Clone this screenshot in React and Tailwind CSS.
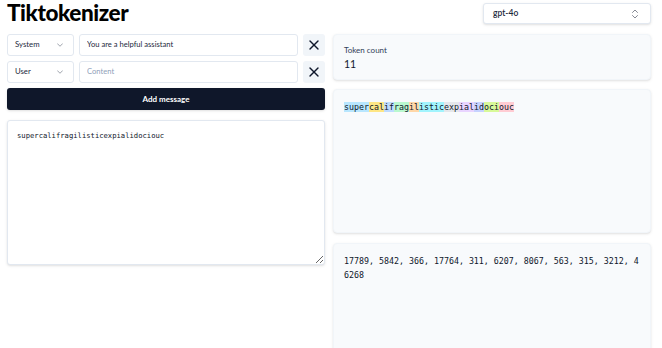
import { X, ChevronDown, ChevronsUpDown } from 'lucide-react';

const TOKENS = [
  ['super', 'bg-sky-200'],
  ['cal', 'bg-amber-200'],
  ['if', 'bg-blue-200'],
  ['rag', 'bg-green-200'],
  ['il', 'bg-orange-200'],
  ['istic', 'bg-cyan-200'],
  ['exp', 'bg-gray-200'],
  ['ial', 'bg-purple-200'],
  ['id', 'bg-indigo-200'],
  ['oci', 'bg-lime-200'],
  ['ouc', 'bg-rose-200'],
];

const IDS = [17789, 5842, 366, 17764, 311, 6207, 8067, 563, 315, 3212, 46268];

function MessageRow({ role, content }) {
  return (
    <div className="flex gap-[5px] h-[22px]">
      <div className="w-[67px] flex items-center justify-between pl-[7px] pr-[8px] rounded-[3px] border border-slate-200 bg-white text-[7.75px] text-slate-800">
        <span>{role}</span>
        <ChevronDown size={10} className="opacity-50" />
      </div>
      <input
        defaultValue={content}
        placeholder="Content"
        className="flex-1 min-w-0 px-[7px] rounded-[3px] border border-slate-200 bg-white text-[7.6px] text-slate-800 placeholder:text-slate-400 outline-none"
      />
      <button className="w-[22px] flex items-center justify-center rounded-[3px] bg-slate-100 text-slate-900">
        <X size={16} strokeWidth={2} />
      </button>
    </div>
  );
}

export default function App() {
  return (
    <div className="w-[662px] h-[348px] overflow-hidden bg-white text-slate-900 [font-family:Lato,sans-serif]">
      <div className="pl-[7px] pr-[11px] pt-[3px]">
        <div className="flex items-center justify-between h-[21px]">
          <h1 className="text-[22.5px] font-black leading-none tracking-[-0.4px] text-black">Tiktokenizer</h1>
          <div className="w-[168px] h-[21px] flex items-center justify-between pl-[9px] pr-[9px] rounded-[3px] border border-slate-200 bg-white shadow-sm">
            <span className="text-[8.5px] font-semibold text-slate-800">gpt-4o</span>
            <ChevronsUpDown size={12} className="opacity-50" />
          </div>
        </div>

        <div className="mt-[10px] grid grid-cols-2 gap-[8px]">
          <div className="flex flex-col">
            <div className="flex flex-col gap-[5px]">
              <MessageRow role="System" content="You are a helpful assistant" />
              <MessageRow role="User" content="" />
            </div>
            <button className="mt-[5px] h-[22px] rounded-[3px] bg-[#0f172a] text-white text-[8px] font-bold shadow-sm">
              Add message
            </button>
            <textarea
              defaultValue="supercalifragilisticexpialidociouc"
              className="mt-[10px] h-[145px] w-full px-[9px] pt-[9px] rounded-[3px] border border-slate-200 bg-white text-[7.2px] leading-[12px] text-slate-900 outline-none [font-family:'DejaVu_Sans_Mono',monospace] shadow-sm"
            />
          </div>

          <div className="flex flex-col">
            <div className="h-[46px] px-[10px] pt-[10px] rounded-[4px] border border-slate-100 bg-slate-50 shadow-sm">
              <div className="text-[8px] leading-[10px] text-slate-700">Token count</div>
              <div className="mt-[3px] text-[10.5px] leading-[12px] text-slate-900">11</div>
            </div>
            <div className="mt-[9px] h-[144px] px-[10px] pt-[10px] rounded-[4px] border border-slate-100 bg-slate-50 shadow-sm">
              <pre className="text-[8.3px] leading-[15px] text-slate-900 [font-family:'DejaVu_Sans_Mono',monospace]">
                {TOKENS.map(([t, c], i) => (
                  <span key={i} className={c}>{t}</span>
                ))}
              </pre>
            </div>
            <div className="mt-[10px] h-[120px] px-[10px] pt-[10px] rounded-[4px] border border-slate-100 bg-slate-50 shadow-sm">
              <p className="break-all text-[8.3px] leading-[14px] text-slate-900 [font-family:'DejaVu_Sans_Mono',monospace]">
                {IDS.join(', ')}
              </p>
            </div>
          </div>
        </div>
      </div>
    </div>
  );
}
